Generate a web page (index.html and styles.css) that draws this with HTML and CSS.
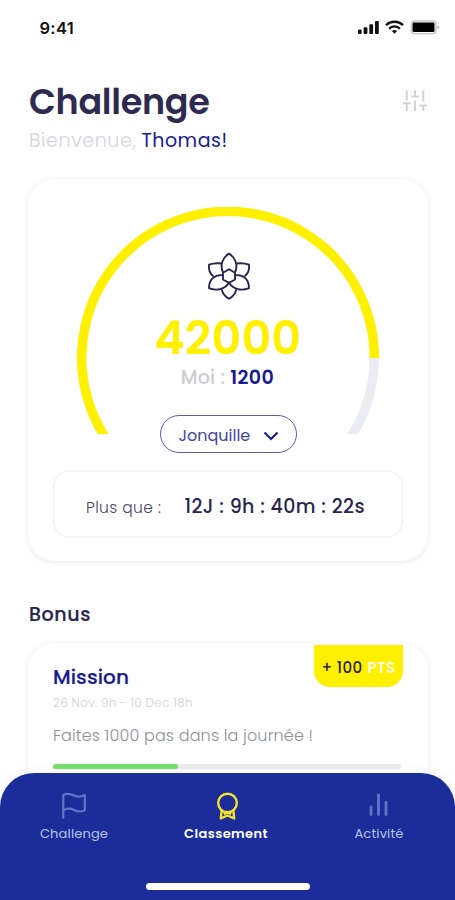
FILE: index.html
```html
<!DOCTYPE html>
<html lang="fr">
<head>
<meta charset="utf-8">
<meta name="viewport" content="width=device-width, initial-scale=1">
<title>Challenge</title>
<link rel="stylesheet" href="styles.css">
</head>
<body>
<div class="screen">
  <div class="status">
    <span class="status-time">9:41</span>
    <svg class="status-icons" width="82" height="16" viewBox="0 0 82 16">
      <g fill="#111">
        <rect x="0" y="9.500" width="3.600" height="4.500" rx="1"/>
        <rect x="5.600" y="7.200" width="3.800" height="6.800" rx="1"/>
        <rect x="11.300" y="4.200" width="3.800" height="9.800" rx="1"/>
        <rect x="17" y="1" width="3.800" height="13" rx="1"/>
      </g>
      <g fill="none" stroke="#111" stroke-width="2.300">
        <path d="M28 5.200a12.200 12.200 0 0 1 17 0"/>
        <path d="M31.100 8.700a7.600 7.600 0 0 1 10.800 0"/>
      </g>
      <path d="M36.500 13.800l-2.600-2.700a3.800 3.800 0 0 1 5.200 0z" fill="#111"/>
      <rect x="53.200" y="1" width="24.800" height="12.600" rx="3" fill="none" stroke="#c4c4c4" stroke-width="1.300"/>
      <rect x="54.500" y="2.500" width="22" height="9.600" rx="1.400" fill="#000"/>
      <path d="M79.500 5.200v4.200q1.600-.6 1.600-2.100T79.500 5.200z" fill="#aaa"/>
    </svg>
  </div>

  <header class="header">
    <div>
      <h1 class="title">Challenge</h1>
      <p class="welcome"><span class="hello">Bienvenue,</span> <span class="name">Thomas!</span></p>
    </div>
    <svg class="filters" width="26" height="24" viewBox="0 0 26 24" fill="none" stroke="#d2d3da" stroke-width="2">
      <path d="M4.800 1.500v10M4.800 15v7M1 14.200h7.600M13 1.500v5.500M13 11.500v10.500M9.200 7.500h7.600M21.200 1.500v11M21.200 17v5M17.400 16.400H25"/>
    </svg>
  </header>

  <section class="card score">
    <div class="gauge">
      <svg class="gauge-arc" width="302" height="227" viewBox="0 0 302 227" fill="none" stroke-width="9.400">
        <path d="M297.300 151A146.300 146.300 0 0 1 258 250.400" stroke="#e9ecf0"/>
        <path d="M44 250.400A146.300 146.300 0 1 1 297.300 151" stroke="#fff000"/>
      </svg>
      <div class="gauge-body">
        <svg class="flower" width="44" height="48" viewBox="0 0 44 48" fill="none" stroke="#29254e" stroke-width="1.900" stroke-linejoin="round">
          <path d="M16 20.500C12.500 12.500 16 5.500 22 1.500C28 5.500 31.500 12.500 28 20.500"/>
          <path d="M14.600 11.500C10 10.800 6 11.200 2 12.700C1.400 17.500 2.600 21.500 6.400 24.200"/>
          <path d="M29.400 11.500C34 10.800 38 11.200 42 12.700C42.600 17.500 41.400 21.500 37.600 24.200"/>
          <path d="M15.600 23.200C7.500 22.500 2 27.500 2 36.200C9.500 39.200 17.800 37.500 22 30.800"/>
          <path d="M28.400 23.200C36.500 22.500 42 27.500 42 36.200C34.500 39.200 26.200 37.500 22 30.800"/>
          <path d="M14.800 37.300C15.500 41.500 18 44.500 22 46.800C26 44.500 28.500 41.500 29.200 37.300"/>
          <path d="M22 17.300L28 20.800V27.500L22 30.800L16 27.500V20.800Z"/>
        </svg>
        <div class="points">42000</div>
        <div class="me"><span class="me-label">Moi :</span><span class="me-value">1200</span></div>
      </div>
    </div>
    <button class="picker"><span>Jonquille</span>
      <svg width="16" height="10" viewBox="0 0 16 10" fill="none" stroke="#1a1f8c" stroke-width="2.200"><path d="M1.500 1.500L8 8l6.500-6.500"/></svg>
    </button>
    <div class="timer"><span class="timer-label">Plus que :</span><span class="timer-value">12J : 9h : 40m : 22s</span></div>
  </section>

  <h2 class="section-title">Bonus</h2>

  <section class="card mission">
    <div class="mission-top">
      <div>
        <h3 class="mission-title">Mission</h3>
        <p class="mission-date">26 Nov. 9h - 10 Dec 18h</p>
      </div>
      <div class="badge"><span class="badge-num">+ 100</span> <span class="badge-unit">PTS</span></div>
    </div>
    <p class="mission-text">Faites 1000 pas dans la journée !</p>
    <div class="progress"><div class="progress-fill"></div></div>
  </section>

  <nav class="nav">
    <div class="tabs">
      <a class="tab tab-challenge">
        <svg width="26" height="28" viewBox="0 0 26 28" fill="none" stroke="#6673c2" stroke-width="2.200" stroke-linejoin="round" stroke-linecap="round"><path d="M2.300 26V3C6 1 9.500 1.700 13 3.500S20 5 23.800 3V18.200C20 20.200 16.500 19.800 13 18S6 16.200 2.300 18.200"/></svg>
        <span>Challenge</span>
      </a>
      <a class="tab tab-ranking">
        <svg width="26" height="28" viewBox="0 0 26 28" fill="none" stroke="#f4e32e" stroke-width="2.400" stroke-linejoin="round"><circle cx="13.500" cy="11" r="9.300"/><path d="M7.700 18.500L6.800 26.400L13.500 23.500L20.200 26.400L19.300 18.500M9.800 22.200l3.700-1.700 3.700 1.700"/></svg>
        <span>Classement</span>
      </a>
      <a class="tab tab-activity">
        <svg width="26" height="28" viewBox="0 0 26 28" fill="none" stroke="#6673c2" stroke-width="2.800" stroke-linecap="round"><path d="M5 15V22.600M12.500 3V22.600M20 10.500V22.600"/></svg>
        <span>Activité</span>
      </a>
    </div>
    <div class="home-bar"></div>
  </nav>
</div>
</body>
</html>
```
FILE: styles.css
```css
* { box-sizing: border-box; }
body { margin: 0; background: #fefefe; font-family: Poppins, Inter, "Liberation Sans", sans-serif; color: #2a2550; }
h1, h2, h3, p { margin: 0; }
.screen { position: relative; width: 455px; height: 900px; overflow: hidden; padding: 0 27px 0 28px; white-space: nowrap; }

.status { display: flex; justify-content: space-between; padding: 18px 0 0 11.5px; margin-right: -12px; height: 80px; }
.status-time { font-family: Inter, sans-serif; font-size: 16.5px; font-weight: 600; line-height: 21px; color: #111; letter-spacing: 0.3px; }
.status-icons { margin-top: 2px; }

.header { display: flex; justify-content: space-between; height: 99px; padding-left: 1px; }
.title { font-size: 35px; font-weight: 600; line-height: 44px; letter-spacing: -0.3px; color: #2f2b50; }
.welcome { font-size: 19px; line-height: 24px; margin-top: 5px; }
.hello { color: #d3d4dc; font-weight: 300; letter-spacing: 0.65px; }
.name { color: #171a92; letter-spacing: 0.5px; }
.filters { margin-top: 9px; }

.card { background: #fff; border-radius: 26px; box-shadow: 0 1px 5px rgba(0, 0, 0, 0.08); }

.score { height: 382px; padding-top: 28px; display: flex; flex-direction: column; align-items: center; }
.gauge { display: grid; width: 302px; height: 227px; margin-left: -1px; }
.gauge-arc, .gauge-body { grid-area: 1 / 1; }
.gauge-body { display: flex; flex-direction: column; align-items: center; padding-top: 45px; }
.flower { display: block; margin-left: 2px; }
.points { font-size: 46px; font-weight: 600; line-height: 56px; margin-top: 10px; padding-left: 1px; letter-spacing: 0.2px; color: #fff000; }
.me { display: flex; gap: 5px; font-size: 19px; line-height: 24px; }
.me-label { color: #cccdd4; font-weight: 500; letter-spacing: 0.2px; }
.me-value { color: #171a92; font-weight: 600; letter-spacing: 0.4px; }

.picker { display: flex; align-items: center; justify-content: space-between; width: 137px; height: 38px; margin-top: -19px; padding: 3px 17px 0 18px; border: 1.300px solid #5a5cb0; border-radius: 20px; background: #fff; font: 400 16px Poppins, Inter, sans-serif; color: #4346a0; }
.timer { display: flex; align-items: center; justify-content: space-between; width: 350px; height: 68px; margin-top: 17px; padding: 5px 36px 0 31px; border: 2px solid #f5f5f6; border-radius: 16px; }
.timer-label { font-size: 15.5px; font-weight: 300; letter-spacing: 0.4px; padding-top: 2px; color: #4a4668; }
.timer-value { font-size: 19px; font-weight: 500; letter-spacing: 0.4px; }

.section-title { margin-top: 42px; padding-left: 1px; font-size: 19px; font-weight: 500; letter-spacing: 0.6px; line-height: 24px; height: 40px; -webkit-text-stroke: 0.2px #2a2550; }

.mission { height: 170px; padding: 2px 25px 0; }
.mission-top { display: flex; justify-content: space-between; height: 78px; }
.mission-title { font-size: 20px; font-weight: 500; line-height: 24px; margin-top: 20px; letter-spacing: 0.1px; color: #171a92; -webkit-text-stroke: 0.2px #171a92; }
.mission-date { font-size: 12px; font-weight: 300; line-height: 16px; letter-spacing: 0.3px; margin-top: 6px; color: #cfd0d6; }
.badge { width: 89px; height: 42px; padding-top: 3px; background: #fff000; border-radius: 0 0 16px 16px; display: flex; align-items: center; justify-content: center; gap: 5px; font-size: 15px; }
.badge-num { font-weight: 500; letter-spacing: 0.4px; }
.badge-unit { font-weight: 600; color: #fffde0; letter-spacing: 0.4px; }
.mission-text { font-size: 16px; font-weight: 300; line-height: 24px; padding-top: 1px; letter-spacing: 0.15px; color: #8c929c; }
.progress { margin-top: 16px; height: 5px; width: 348px; border-radius: 3px; background: #ececee; }
.progress-fill { width: 36%; height: 100%; border-radius: 3px; background: #72e36c; }

.nav { position: absolute; left: 0; right: 0; bottom: 0; height: 127px; background: #1a2d9b; border-radius: 34px 34px 0 0; box-shadow: 0 0 14px rgba(0, 0, 0, 0.06); padding-top: 19px; }
.tabs { display: flex; justify-content: space-between; padding: 0 29px 0 27px; height: 91px; }
.tab { display: flex; flex-direction: column; align-items: center; width: 94px; font-size: 13px; line-height: 18px; letter-spacing: 0.15px; color: #bcc2ea; }
.tab svg { display: block; }
.tab span { margin-top: 5px; }
.tab-ranking { color: #fff; font-weight: 600; letter-spacing: 0.4px; }
.tab-ranking span { margin-left: -1px; }
.home-bar { width: 164px; height: 7px; border-radius: 4px; background: #fff; margin: 0 auto; }
```
